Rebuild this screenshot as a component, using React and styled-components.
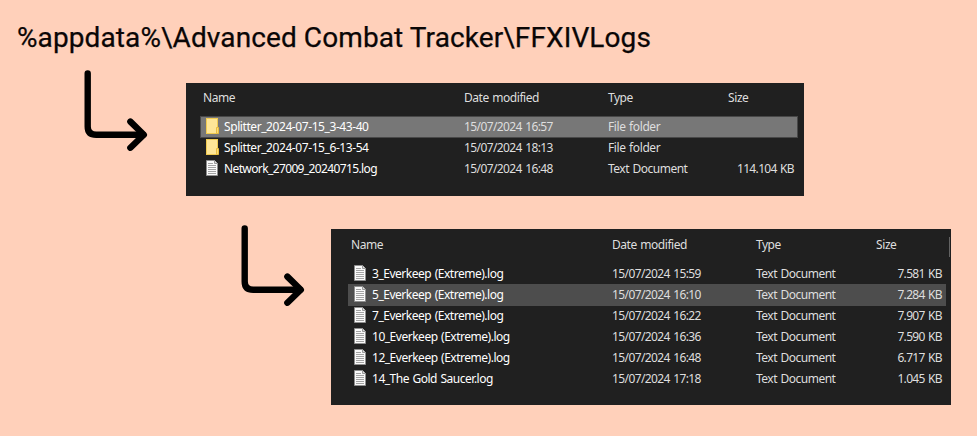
import React from "react";
import styled, { createGlobalStyle } from "styled-components";

const GlobalStyle = createGlobalStyle`
  html, body { margin: 0; padding: 0; background: #ffd0ba; }
  * { box-sizing: border-box; }
`;

const Page = styled.main`
  width: 977px;
  height: 436px;
  overflow: hidden;
  display: flex;
  flex-direction: column;
  background: #ffd0ba;
`;

const Title = styled.h1`
  margin: 0;
  padding: 21px 0 0 17px;
  height: 70px;
  font: 400 28px/34px Roboto, sans-serif;
  letter-spacing: ${(p) => p.$tracking}px;
  color: #0a0606;
  -webkit-text-stroke: 0.25px #0a0606;
  white-space: nowrap;
`;

const Step = styled.section`
  display: flex;
  align-items: flex-start;
  margin-left: ${(p) => p.$indent}px;
  height: ${(p) => p.$height}px;
`;

const ArrowSvg = styled.svg`
  flex: none;
  width: 68px;
  height: 84px;
  fill: none;
  stroke: #000;
  stroke-width: 6.4;
  stroke-linecap: round;
  stroke-linejoin: round;
`;

const Panel = styled.div`
  flex: none;
  width: ${(p) => p.$width}px;
  height: ${(p) => p.$height}px;
  margin: ${(p) => p.$top}px 0 0 ${(p) => p.$left}px;
  padding: ${(p) => p.$padTop}px 0 0 ${(p) => p.$padLeft}px;
  background: #202020;
  color: #dedede;
  font: 400 12px/20px "Noto Sans", "Open Sans", sans-serif;
  word-spacing: 0.8px;
`;

const columns = "264px 144px 120px 66px";

const Header = styled.div`
  display: flex;
  height: ${(p) => p.$height}px;
`;

const HeaderCells = styled.div`
  display: grid;
  grid-template-columns: ${columns};
  width: 598px;
  height: 20px;
`;

const HeaderCell = styled.span`
  padding-left: ${(p) => (p.$first ? 3 : 0)}px;
  letter-spacing: ${(p) => p.$tracking}px;
  white-space: nowrap;
`;

const Divider = styled.i`
  width: 1px;
  height: 20px;
  margin: 2px 0 0 3px;
  background: #636363;
`;

const tones = {
  plain: { fill: "transparent", edge: "transparent" },
  selected: { fill: "#777777", edge: "#484848" },
  hover: { fill: "#4d4d4d", edge: "#4d4d4d" },
};

const Row = styled.div`
  display: grid;
  grid-template-columns: ${columns};
  width: 598px;
  height: 22px;
  margin-bottom: -1px;
  background: ${(p) => tones[p.$tone].fill};
  box-shadow: inset 0 0 0 1px ${(p) => tones[p.$tone].edge};
  line-height: 22px;
`;

const Cell = styled.span`
  letter-spacing: ${(p) => p.$tracking}px;
  white-space: nowrap;
  text-align: ${(p) => (p.$end ? "right" : "left")};
`;

const NameCell = styled.div`
  display: flex;
  align-items: flex-start;
  padding-left: 6px;
  gap: 5px;
  color: #fff;
`;

const Icon = styled.svg`
  flex: none;
  width: 13px;
  height: 16px;
  margin-top: 2px;
`;

const Arrow = () => (
  <ArrowSvg viewBox="0 0 68 84">
    <path d="M3.7 3.4V56.5Q3.7 64.8 12.2 64.8H59" />
    <path d="M46.4 51.6L59.8 64.8L46.4 77.7" />
  </ArrowSvg>
);

const FolderIcon = () => (
  <Icon viewBox="0 0 13 16">
    <rect x="0.5" y="0.5" width="11" height="15" fill="#fee697" stroke="#f0ca50" />
    <path d="M10.5 9.5H12.5V15.5H10.5Z" fill="#fbdc78" stroke="#e8bd3e" />
  </Icon>
);

const DocumentIcon = () => (
  <Icon viewBox="0 0 13 16">
    <path d="M0.5 0.5H8.5L11.5 3.5V15.5H0.5Z" fill="#fafafa" stroke="#8f8f8f" />
    <path d="M8.5 0.5V3.5H11.5" fill="#ddd" stroke="#999" />
    <path d="M2 3.5H7M2 5.5H10M2 7.5H10M2 9.5H10M2 11.5H10M2 13.5H10" stroke="#a3a3a3" />
  </Icon>
);

function FileHeader({ height, divider }) {
  return (
    <Header $height={height}>
      <HeaderCells>
        <HeaderCell $first $tracking={-0.4}>Name</HeaderCell>
        <HeaderCell $tracking={-0.45}>Date modified</HeaderCell>
        <HeaderCell $tracking={-0.5}>Type</HeaderCell>
        <HeaderCell $tracking={-0.4}>Size</HeaderCell>
      </HeaderCells>
      {divider && <Divider />}
    </Header>
  );
}

function FileRow({ name, date, folder, size, tone = "plain" }) {
  return (
    <Row $tone={tone}>
      <NameCell>
        {folder ? <FolderIcon /> : <DocumentIcon />}
        <Cell $tracking={folder ? -0.42 : name.startsWith("Network") ? -0.62 : -0.48}>{name}</Cell>
      </NameCell>
      <Cell $tracking={-0.6}>{date}</Cell>
      <Cell $tracking={folder ? -0.4 : -0.5}>{folder ? "File folder" : "Text Document"}</Cell>
      <Cell $end $tracking={-0.65}>{size}</Cell>
    </Row>
  );
}

const logs = [
  { name: "Splitter_2024-07-15_3-43-40", date: "15/07/2024 16:57", folder: true, tone: "selected" },
  { name: "Splitter_2024-07-15_6-13-54", date: "15/07/2024 18:13", folder: true },
  { name: "Network_27009_20240715.log", date: "15/07/2024 16:48", size: "114.104 KB" },
];

const splits = [
  { name: "3_Everkeep (Extreme).log", date: "15/07/2024 15:59", size: "7.581 KB" },
  { name: "5_Everkeep (Extreme).log", date: "15/07/2024 16:10", size: "7.284 KB", tone: "hover" },
  { name: "7_Everkeep (Extreme).log", date: "15/07/2024 16:22", size: "7.907 KB" },
  { name: "10_Everkeep (Extreme).log", date: "15/07/2024 16:36", size: "7.590 KB" },
  { name: "12_Everkeep (Extreme).log", date: "15/07/2024 16:48", size: "6.717 KB" },
  { name: "14_The Gold Saucer.log", date: "15/07/2024 17:18", size: "1.045 KB" },
];

export default function App() {
  return (
    <>
      <GlobalStyle />
      <Page>
        <Title $tracking={0.1}>{"%appdata%\\Advanced Combat Tracker\\FFXIVLogs"}</Title>
        <Step $indent={84} $height={155}>
          <Arrow />
          <Panel $width={618} $height={113} $top={13} $left={34} $padTop={5} $padLeft={14}>
            <FileHeader height={28} />
            {logs.map((f) => <FileRow key={f.name} {...f} />)}
          </Panel>
        </Step>
        <Step $indent={241} $height={190}>
          <Arrow />
          <Panel $width={620} $height={176} $top={4} $left={22} $padTop={6} $padLeft={17}>
            <FileHeader height={28} divider />
            {splits.map((f) => <FileRow key={f.name} {...f} />)}
          </Panel>
        </Step>
      </Page>
    </>
  );
}
